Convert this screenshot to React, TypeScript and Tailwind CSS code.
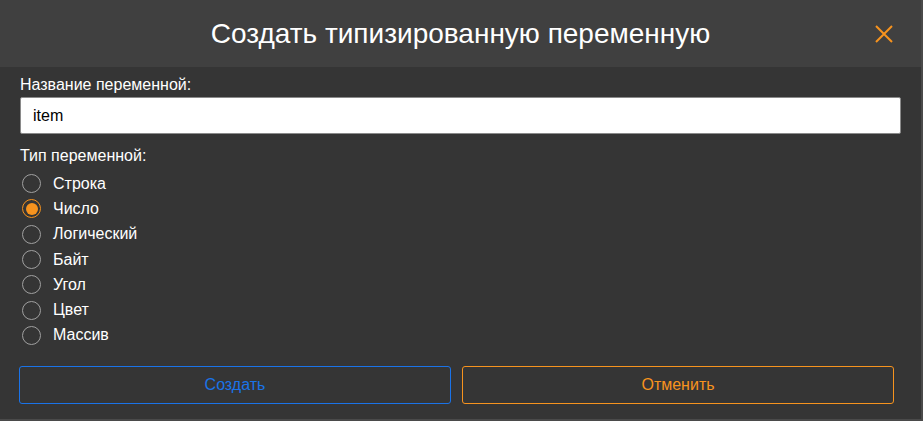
import React, { useState } from 'react';

const TYPES = ['Строка', 'Число', 'Логический', 'Байт', 'Угол', 'Цвет', 'Массив'];

const CloseIcon = () => (
  <svg width="20" height="20" viewBox="0 0 20 20" fill="none" stroke="#f7931e" strokeWidth="2">
    <path d="M2 2 L18 18 M18 2 L2 18" />
  </svg>
);

export default function App() {
  const [name, setName] = useState('item');
  const [type, setType] = useState('Число');

  return (
    <div className="w-[923px] h-[421px] bg-[#4a4a4a] font-['Liberation_Sans',Arial,sans-serif]">
      <div className="w-[921px] h-[419px] bg-[#353535] flex flex-col">
        {/* Header */}
        <div className="h-[67px] bg-[#404040] flex items-center justify-center relative shrink-0">
          <h1 className="text-[28px] text-white font-normal">Создать типизированную переменную</h1>
          <button className="absolute right-[27px] top-[24px]">
            <CloseIcon />
          </button>
        </div>

        {/* Body */}
        <div className="flex flex-col px-5 pt-[8px]">
          <label className="text-[16px] leading-[19px] text-white">Название переменной:</label>
          <input
            value={name}
            onChange={(e) => setName(e.target.value)}
            className="mt-[3px] h-[37px] bg-white border border-[#8a8a8a] rounded-[2px] px-3 text-[16px] text-black outline-none"
          />

          <div className="mt-[12px] text-[16px] leading-[19px] text-white">Тип переменной:</div>
          <div className="flex flex-col mt-[6px]">
            {TYPES.map((t) => (
              <label key={t} className="flex items-center h-[25.3px] cursor-pointer" onClick={() => setType(t)}>
                <span
                  className={`w-[19px] h-[19px] ml-[2px] rounded-full border-[1.5px] flex items-center justify-center ${
                    type === t ? 'border-[#f7931e]' : 'border-[#a0a0a0]'
                  }`}
                >
                  {type === t && <span className="w-[12px] h-[12px] rounded-full bg-[#f7931e]" />}
                </span>
                <span className="ml-[12px] text-[16px] text-white">{t}</span>
              </label>
            ))}
          </div>
        </div>

        {/* Buttons */}
        <div className="flex gap-[11px] pl-[19px] pr-[27px] mt-[18px]">
          <button className="flex-1 h-[38px] border border-[#1a73e8] rounded-[3px] text-[16px] text-[#1a73e8]">
            Создать
          </button>
          <button className="flex-1 h-[38px] border border-[#f7931e] rounded-[3px] text-[16px] text-[#f7931e]">
            Отменить
          </button>
        </div>
      </div>
    </div>
  );
}
